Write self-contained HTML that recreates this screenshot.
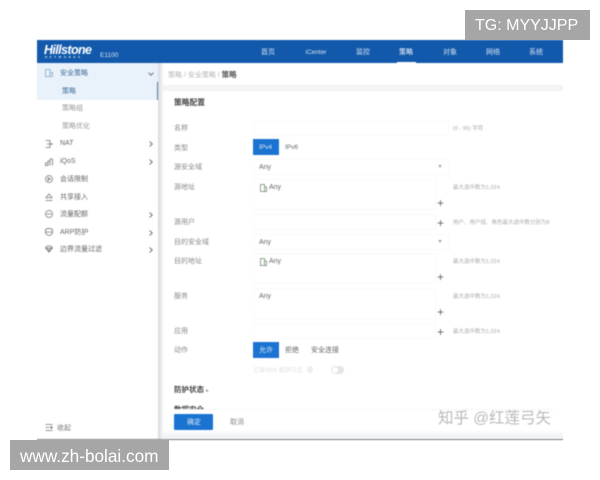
<!DOCTYPE html>
<html><head><meta charset="utf-8"><style>
html,body{margin:0;padding:0;width:600px;height:480px;overflow:hidden;background:#fff}
body{position:relative;font-family:"Liberation Sans","Noto Sans CJK SC",sans-serif}
#app{position:absolute;left:0;top:0;width:600px;height:480px;filter:blur(.45px)}
.a{position:absolute;white-space:nowrap;line-height:14px;font-size:7px;color:#666;margin-top:1px}
.b{position:absolute}
.n{color:#d5e3f3;font-size:7px;transform:translateX(-50%);top:45px}
.m{left:60px;color:#666;font-size:7px}
.l{left:174px;color:#888;font-size:7px}
.h{left:453px;color:#aaa;font-size:5.5px}
.p{left:436px;color:#666;font-size:12px;font-weight:normal;width:9px;text-align:center}
.box{position:absolute;left:253px;border:1px solid #f8f8f9;border-left-color:#fcfcfc;box-sizing:border-box}
svg{position:absolute;overflow:visible;fill:none;stroke:#777;stroke-width:.8}
.c{position:absolute;left:149px;width:3px;height:3px;border-top:1px solid #777;border-right:1px solid #777;transform:rotate(45deg)}
</style></head><body>
<div id="app">
<div class="b" style="left:37px;top:40px;width:526px;height:23px;background:#1259ab"></div>
<div class="a" style="left:44px;top:42px;font-size:12.5px;line-height:15px;font-weight:bold;font-style:italic;color:#fff;letter-spacing:-.6px">Hillstone</div>
<div class="a" style="left:45px;top:54px;font-size:3px;line-height:4px;color:#dce8f5;letter-spacing:2.5px;font-weight:bold">NETWORKS</div>
<div class="a" style="left:100px;top:48px;color:#dce8f5;font-size:6.5px">E1100</div>
<div class="a n" style="left:268px">首页</div>
<div class="a n" style="left:316px;font-size:6.5px">iCenter</div>
<div class="a n" style="left:363px">监控</div>
<div class="a n" style="left:406px;color:#fff">策略</div>
<div class="a n" style="left:450px">对象</div>
<div class="a n" style="left:493px">网络</div>
<div class="a n" style="left:536px">系统</div>
<div class="b" style="left:397px;top:62px;width:19px;height:1px;background:#fff"></div>

<div class="b" style="left:37px;top:63px;width:121px;height:37px;background:#e9f2fb"></div>
<div class="b" style="left:157px;top:82px;width:2px;height:18px;background:#5a7fa8"></div>
<div class="b" style="left:158px;top:63px;width:5px;height:376px;background:linear-gradient(90deg,#d8dadd,#f6f7f8)"></div>
<div class="b" style="left:163px;top:85px;width:400px;height:6px;background:#f3f4f5"></div>
<div class="b" style="left:163px;top:430px;width:400px;height:8px;background:linear-gradient(#fff,#edf0f3)"></div>
<div class="b" style="left:37px;top:438.5px;width:526px;height:1px;background:#777"></div>

<svg style="left:45px;top:69px;width:8px;height:8px;stroke:#7ea5c9"><path d="M.5.5H5V7.5H.5ZM5 3.5H7.5V7.5H5"/></svg>
<div class="a m" style="top:66px;color:#3d6c98">安全策略</div>
<div class="c" style="top:71px;transform:rotate(135deg)"></div>
<div class="a" style="left:62px;top:84px;color:#3d6c98">策略</div>
<div class="a" style="left:62px;top:101px;color:#999">策略组</div>
<div class="a" style="left:62px;top:119px;color:#999">策略优化</div>

<svg style="left:45px;top:140px;width:8px;height:8px"><path d="M.5.5H5V7.5H.5M2 4H7.5M6.5 3V5"/></svg>
<div class="a m" style="top:136px">NAT</div><div class="c" style="top:142px;left:148px;transform:rotate(45deg)"></div>
<svg style="left:45px;top:158px;width:8px;height:8px"><path d="M.5 7.5V5H3V7.5ZM3 7.5V3H5V7.5M5 7.5V1H7.5V7.5"/></svg>
<div class="a m" style="top:154px">iQoS</div><div class="c" style="top:160px;left:148px"></div>
<svg style="left:45px;top:175px;width:8px;height:8px"><circle cx="4" cy="4" r="3.5"/><path d="M3 2.5L5.5 4L3 5.5Z"/></svg>
<div class="a m" style="top:172px">会话限制</div>
<svg style="left:45px;top:193px;width:8px;height:8px"><path d="M.5 5L4 1L7.5 5M.5 7.5H7.5M1.5 5.5C3 4 5 4 6.5 5.5"/></svg>
<div class="a m" style="top:190px">共享接入</div>
<svg style="left:45px;top:210px;width:8px;height:8px"><circle cx="4" cy="4" r="3.5"/><path d="M1.5 4H6.5"/></svg>
<div class="a m" style="top:207px">流量配额</div><div class="c" style="top:213px;left:148px"></div>
<svg style="left:45px;top:228px;width:8px;height:8px"><path d="M.5 1.5C3 0 5 0 7.5 1.5V5C6 7 5 7.5 4 7.5C3 7.5 2 7 .5 5ZM.5 4H7.5"/></svg>
<div class="a m" style="top:225px">ARP防护</div><div class="c" style="top:231px;left:148px"></div>
<svg style="left:45px;top:245px;width:8px;height:8px"><path d="M2 1H6L7.5 3L4 7L.5 3ZM.5 3H7.5M2.5 3L4 7L5.5 3"/></svg>
<div class="a m" style="top:242px">边界流量过滤</div><div class="c" style="top:248px;left:148px"></div>
<svg style="left:45px;top:424px;width:8px;height:7px"><path d="M.5.5H7.5M.5 3.5H4.5M.5 6.5H7.5"/><path d="M6 2.5L7.5 3.5L6 4.5Z" fill="#777"/></svg>
<div class="a" style="left:57px;top:421px;color:#777">收起</div>

<div class="a" style="left:168px;top:67px;color:#b5b5b5">策略 / 安全策略 / <span style="color:#555;font-weight:bold;font-size:7.5px">策略</span></div>
<div class="a" style="left:174px;top:95px;color:#444;font-weight:bold;font-size:7.75px">策略配置</div>

<div class="a l" style="top:121px">名称</div>
<div class="a l" style="top:141px">类型</div>
<div class="a l" style="top:160px">源安全域</div>
<div class="a l" style="top:180px">源地址</div>
<div class="a l" style="top:215px">源用户</div>
<div class="a l" style="top:235px">目的安全域</div>
<div class="a l" style="top:254px">目的地址</div>
<div class="a l" style="top:289px">服务</div>
<div class="a l" style="top:324px">应用</div>
<div class="a l" style="top:343px">动作</div>

<div class="box" style="top:121px;width:196px;height:15px"></div>
<div class="a h" style="top:121px">(0 - 95) 字符</div>

<div class="b" style="left:253px;top:139px;width:26px;height:16px;background:#1a73d0"></div>
<div class="a" style="left:259px;top:140px;color:#d8e9fa;font-size:6.5px">IPv4</div>
<div class="a" style="left:285px;top:140px;color:#666;font-size:6.5px">IPv6</div>

<div class="box" style="top:159px;width:197px;height:16px"></div>
<div class="a" style="left:259px;top:160px;font-size:7px;color:#666">Any</div>
<div class="b" style="left:438px;top:165px;border:2px solid transparent;border-top:3px solid #aaa"></div>

<div class="box" style="top:179px;width:183px;height:31px"></div>
<svg style="left:260px;top:184px;width:7px;height:8px;stroke:#6f8a6f"><path d="M.5.5H4.5V7.5H.5ZM4.5 3H6.5V7.5H4.5"/></svg>
<div class="a" style="left:269px;top:180px;font-size:7px">Any</div>
<div class="a p" style="top:195px">+</div>
<div class="a h" style="top:180px">最大选中数为1,024</div>

<div class="box" style="top:214px;width:183px;height:16px"></div>
<div class="a p" style="top:215px">+</div>
<div class="a h" style="top:215px">用户、用户组、角色最大选中数分别为8</div>

<div class="box" style="top:234px;width:197px;height:16px"></div>
<div class="a" style="left:259px;top:235px;font-size:7px;color:#666">Any</div>
<div class="b" style="left:438px;top:240px;border:2px solid transparent;border-top:3px solid #aaa"></div>

<div class="box" style="top:253px;width:183px;height:31px"></div>
<svg style="left:260px;top:258px;width:7px;height:8px;stroke:#6f8a6f"><path d="M.5.5H4.5V7.5H.5ZM4.5 3H6.5V7.5H4.5"/></svg>
<div class="a" style="left:269px;top:254px;font-size:7px">Any</div>
<div class="a p" style="top:269px">+</div>
<div class="a h" style="top:254px">最大选中数为1,024</div>

<div class="box" style="top:288px;width:183px;height:32px"></div>
<div class="a" style="left:259px;top:289px;font-size:7px">Any</div>
<div class="a p" style="top:304px">+</div>
<div class="a h" style="top:289px">最大选中数为1,024</div>

<div class="box" style="top:323px;width:183px;height:16px"></div>
<div class="a p" style="top:324px">+</div>
<div class="a h" style="top:324px">最大选中数为1,024</div>

<div class="b" style="left:253px;top:342px;width:26px;height:16px;background:#1a73d0"></div>
<div class="a" style="left:259px;top:343px;color:#d8e9fa">允许</div>
<div class="a" style="left:285px;top:343px">拒绝</div>
<div class="a" style="left:311px;top:343px;color:#666">安全连接</div>
<div class="a" style="left:253px;top:363px;color:#e2e2e2;font-size:6px">记录Web 截屏日志</div>
<div class="b" style="left:307px;top:366px;width:6px;height:7px;border-radius:3px;background:#eee"></div>
<div class="b" style="left:331px;top:366px;width:13px;height:8px;border-radius:4px;background:#e4e4e4"></div>
<div class="b" style="left:332px;top:367px;width:6px;height:6px;border-radius:3px;background:#fff"></div>

<div class="a" style="left:174px;top:382px;color:#444;font-weight:bold;font-size:7.5px">防护状态 <span style="color:#999;font-size:5px">▸</span></div>
<div class="b" style="left:174px;top:409px;width:380px;height:21px;background:#fff;border-top:1px solid #f5f6f7"></div>
<div class="a" style="left:174px;top:404px;height:4px;overflow:hidden;line-height:10px;color:#444;font-weight:bold;font-size:7.5px">数据安全 <span style="color:#999;font-size:5px">⌄</span></div>
<div class="b" style="left:174px;top:414px;width:39px;height:16px;background:#1a73d0;border-radius:1px"></div>
<div class="a" style="left:187px;top:415px;color:#d8e9fa">确定</div>
<div class="a" style="left:230px;top:415px;color:#888">取消</div>

<div class="a" style="left:438px;top:409px;font-size:15.5px;line-height:18px;color:#b9b9b9">知乎 @红莲弓矢</div>
</div>
<div class="b" style="left:465px;top:10px;width:125px;height:30px;background:#a6a6a6"></div>
<div class="a" style="left:475px;top:15px;font-size:16px;line-height:20px;color:#fff">TG: MYYJJPP</div>
<div class="b" style="left:10px;top:440px;width:159px;height:30px;background:#a6a6a6"></div>
<div class="a" style="left:20px;top:445px;font-size:17.2px;line-height:20px;color:#fff">www.zh-bolai.com</div>
</body></html>
